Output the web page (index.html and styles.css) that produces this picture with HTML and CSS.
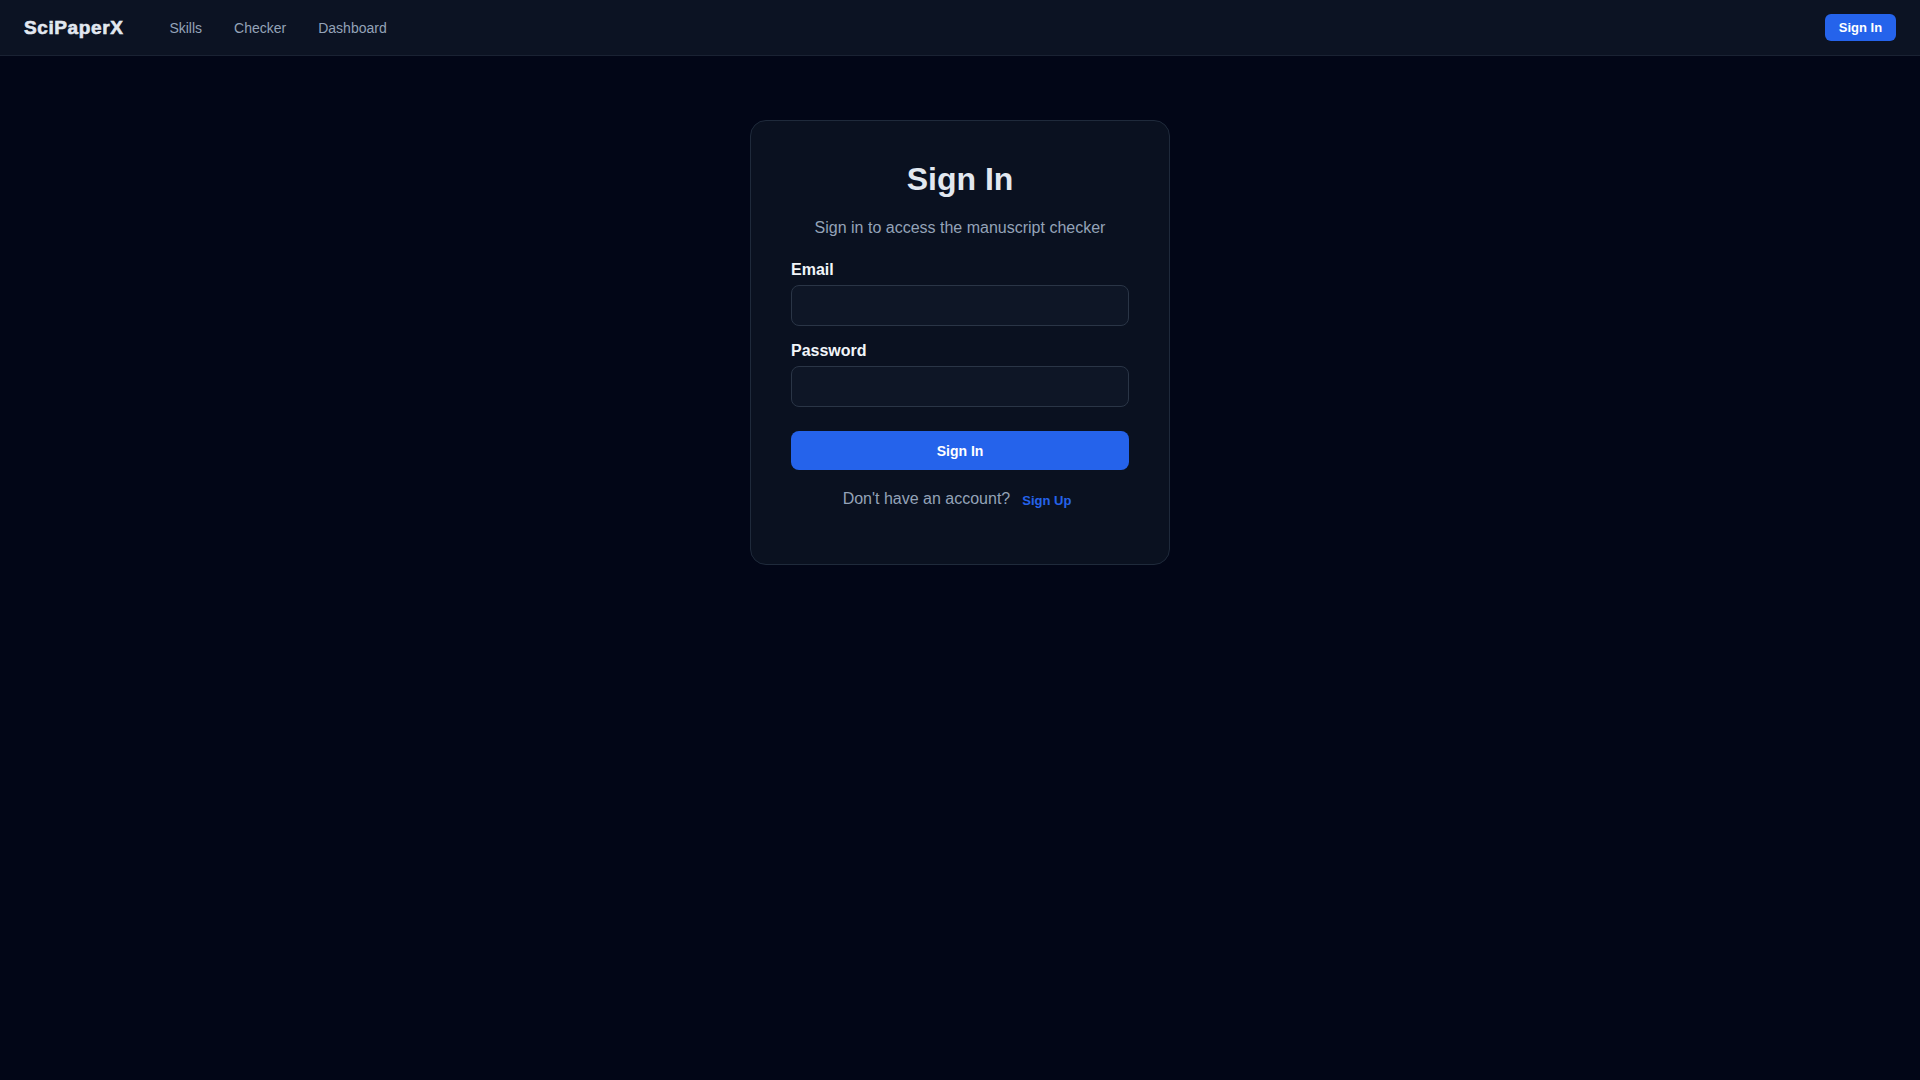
FILE: index.html
```html
<!DOCTYPE html>
<html lang="en">
<head>
<meta charset="utf-8">
<title>Sign In - SciPaperX</title>
<link rel="stylesheet" href="styles.css">
</head>
<body>
<header class="nav">
  <div class="nav-left">
    <a class="logo" href="#">SciPaperX</a>
    <nav class="links">
      <a href="#">Skills</a>
      <a href="#">Checker</a>
      <a href="#">Dashboard</a>
    </nav>
  </div>
  <button class="nav-btn">Sign In</button>
</header>
<main class="main">
  <section class="card">
    <h1 class="title">Sign In</h1>
    <p class="subtitle">Sign in to access the manuscript checker</p>
    <form class="form">
      <label class="label" for="email">Email</label>
      <input class="input" id="email" type="email">
      <label class="label label-2" for="password">Password</label>
      <input class="input" id="password" type="password">
      <button type="button" class="submit">Sign In</button>
    </form>
    <p class="footer">Don't have an account?<button class="link-btn">Sign Up</button></p>
  </section>
</main>
</body>
</html>
```
FILE: styles.css
```css
* { box-sizing: border-box; }
html, body { margin: 0; padding: 0; }
body {
  background: #020617;
  min-height: 1080px;
  font-family: "Liberation Sans", Arial, sans-serif;
  color: #e2e8f0;
}
.nav {
  height: 56px;
  background: #0c1323;
  border-bottom: 1px solid #1a2233;
  display: flex;
  align-items: center;
  justify-content: space-between;
  padding: 0 24px;
}
.nav-left { display: flex; align-items: center; gap: 46px; }
.logo {
  font-size: 19px;
  font-weight: 700;
  color: #e2e8f0;
  text-decoration: none;
  letter-spacing: 0.6px;
  -webkit-text-stroke: 0.6px #e2e8f0;
  margin-top: 1px;
}
.links { display: flex; gap: 32px; }
.links a {
  color: #94a3b8;
  text-decoration: none;
  font-size: 14px;
}
.nav-btn {
  background: #2563eb;
  color: #fff;
  border: 0;
  border-radius: 6px;
  width: 71px;
  height: 27px;
  font-family: "Liberation Sans", Arial, sans-serif;
  font-weight: 700;
  font-size: 13px;
  padding: 0;
}
.main {
  display: flex;
  justify-content: center;
  padding-top: 64px;
}
.card {
  width: 420px;
  background: #0a1120;
  border: 1px solid #1f2a3b;
  border-radius: 16px;
  padding: 39px 40px 53px;
  text-align: center;
}
.title {
  margin: 0;
  font-size: 32px;
  line-height: 38px;
  font-weight: 700;
  color: #e2e8f0;
}
.subtitle {
  margin: 18px 0 18px;
  font-size: 16px;
  line-height: 24px;
  color: #94a3b8;
}
.form { display: flex; flex-direction: column; text-align: left; }
.label {
  font-size: 16px;
  line-height: 24px;
  font-weight: 700;
  color: #f1f5f9;
  margin-bottom: 3px;
}
.label-2 { margin-top: 13px; }
.input {
  height: 41px;
  width: 100%;
  background: #0e1626;
  border: 1px solid #2a3546;
  border-radius: 8px;
  color: #e2e8f0;
  font-size: 15px;
  padding: 0 12px;
}
.submit {
  margin-top: 24px;
  height: 39px;
  background: #2563eb;
  color: #fff;
  border: 0;
  border-radius: 8px;
  font-family: "Liberation Sans", Arial, sans-serif;
  font-weight: 700;
  font-size: 14px;
}
.footer {
  margin: 17px 0 0;
  font-size: 16px;
  line-height: 24px;
  color: #94a3b8;
}
.link-btn {
  background: none;
  border: 0;
  padding: 0 6px 0 12px;
  color: #2563eb;
  font-family: "Liberation Sans", Arial, sans-serif;
  font-weight: 700;
  font-size: 13px;
  cursor: pointer;
  vertical-align: -1px;
}
```
